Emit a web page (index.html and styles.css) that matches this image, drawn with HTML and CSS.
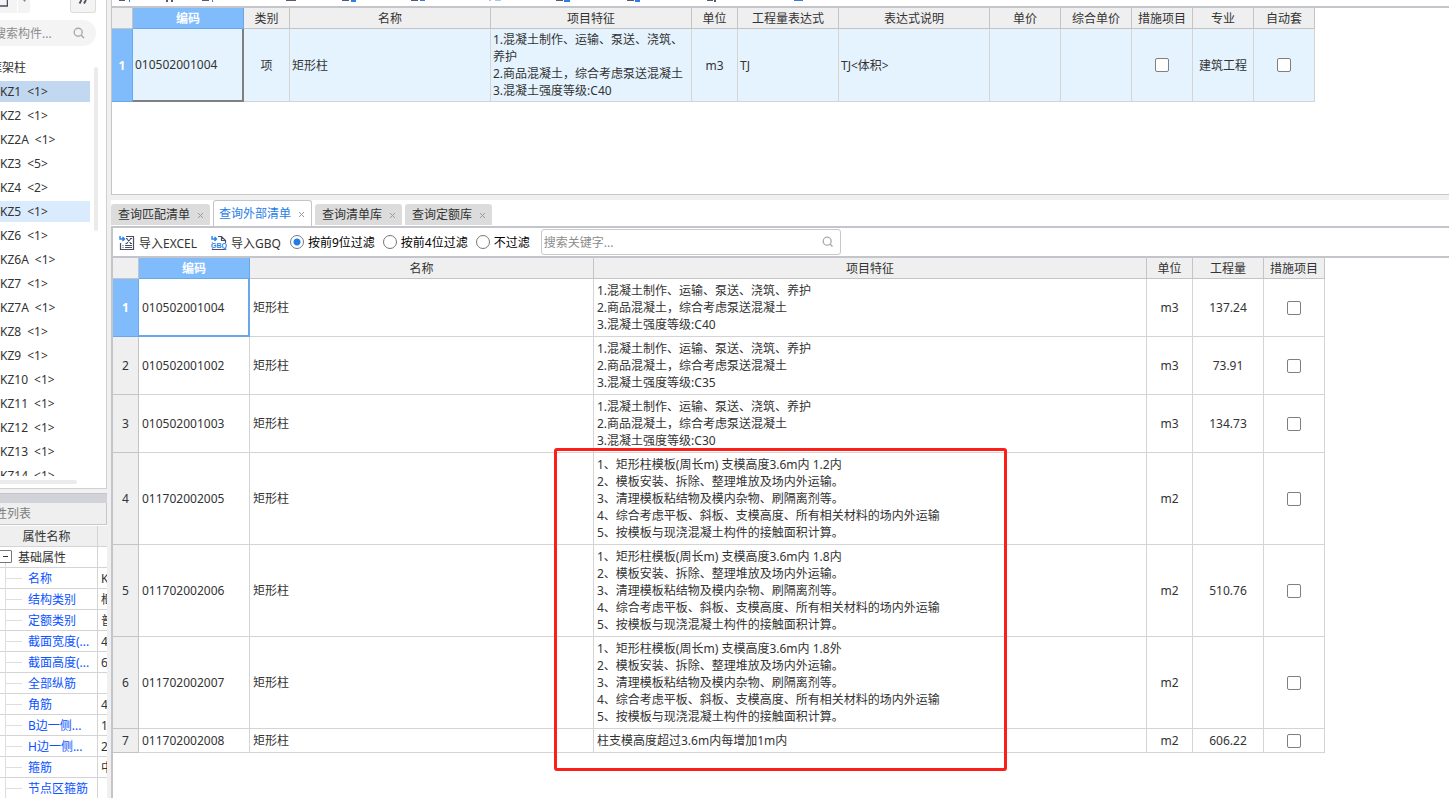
FILE: index.html
```html
<!DOCTYPE html>
<html lang="zh-CN">
<head>
<meta charset="utf-8">
<title>构件做法</title>
<link rel="stylesheet" href="styles.css">
</head>
<body>
<div class="app">
  <aside class="side">
    <section class="components">
      <div class="side-tools">
        <button class="tool-split" type="button" aria-label="新建"><svg width="20" height="12" viewBox="0 0 20 12"><path d="M8 0V6H19.500V0" fill="none" stroke="#4a4d5c" stroke-width="1.500"/></svg></button>
        <button class="tool-arrow" type="button" aria-label="更多"><svg width="5" height="3" viewBox="0 0 5 3"><path d="M1 0H4L2.500 2z" fill="#8a8a8a"/></svg></button>
        <button class="tool-expand" type="button" aria-label="展开"><svg width="10" height="4" viewBox="0 0 10 4"><path d="M1.500 3.500L3.500 0M6 3.500L8 0" fill="none" stroke="#4a4d5c" stroke-width="1.800"/></svg></button>
      </div>
      <label class="side-search">
        <input type="text" placeholder="搜索构件..." aria-label="搜索构件">
        <svg width="12" height="12" viewBox="0 0 12 12"><circle cx="5.200" cy="5.200" r="4" fill="none" stroke="#aaa" stroke-width="1.400"/><path d="M8.200 8.200L11 11" stroke="#aaa" stroke-width="1.600"/></svg>
      </label>
      <div class="tree">
        <ul class="tree-list">
          <li class="group">框架柱</li>
          <li class="current"><span>KZ1</span><span>&lt;1&gt;</span></li>
          <li><span>KZ2</span><span>&lt;1&gt;</span></li>
          <li><span>KZ2A</span><span>&lt;1&gt;</span></li>
          <li><span>KZ3</span><span>&lt;5&gt;</span></li>
          <li><span>KZ4</span><span>&lt;2&gt;</span></li>
          <li class="hover"><span>KZ5</span><span>&lt;1&gt;</span></li>
          <li><span>KZ6</span><span>&lt;1&gt;</span></li>
          <li><span>KZ6A</span><span>&lt;1&gt;</span></li>
          <li><span>KZ7</span><span>&lt;1&gt;</span></li>
          <li><span>KZ7A</span><span>&lt;1&gt;</span></li>
          <li><span>KZ8</span><span>&lt;1&gt;</span></li>
          <li><span>KZ9</span><span>&lt;1&gt;</span></li>
          <li><span>KZ10</span><span>&lt;1&gt;</span></li>
          <li><span>KZ11</span><span>&lt;1&gt;</span></li>
          <li><span>KZ12</span><span>&lt;1&gt;</span></li>
          <li><span>KZ13</span><span>&lt;1&gt;</span></li>
          <li><span>KZ14</span><span>&lt;1&gt;</span></li>
        </ul>
        <div class="scroll-y"></div>
      </div>
      <div class="scroll-x"></div>
    </section>
    <section class="props">
      <div class="props-grip"></div>
      <h2 class="props-title">属性列表</h2>
      <table class="props-table">
        <thead><tr><th class="p-name">属性名称</th><th class="p-val"></th></tr></thead>
        <tbody>
          <tr class="p-group"><td><button class="fold" type="button" aria-label="折叠"></button>基础属性</td><td></td></tr>
          <tr><td>名称</td><td>K</td></tr>
          <tr><td>结构类别</td><td>框</td></tr>
          <tr><td>定额类别</td><td>普</td></tr>
          <tr><td>截面宽度(...</td><td>4</td></tr>
          <tr><td>截面高度(...</td><td>6</td></tr>
          <tr><td>全部纵筋</td><td></td></tr>
          <tr><td>角筋</td><td>4</td></tr>
          <tr><td>B边一侧...</td><td>1</td></tr>
          <tr><td>H边一侧...</td><td>2</td></tr>
          <tr><td>箍筋</td><td>中</td></tr>
          <tr><td>节点区箍筋</td><td></td></tr>
        </tbody>
      </table>
    </section>
  </aside>

  <main class="main">
    <section class="bill">
      <div class="strip">
        <svg width="700" height="2" viewBox="0 0 700 2">
          <g fill="#555a72"><path d="M7 0h6v1h-6zM54 0h2v2h-2zM59 0h2v2h-2zM90 0h7v1h-7zM174 0h10v1h-10zM230 0h7v1h-7zM299 0h7v1h-7zM444 0h7v1h-7zM515 0h7v1h-7zM595 0h6v1h-6zM602 0h2v2h-2z"/></g>
          <g fill="#2f7de6"><path d="M17 0h1v2h-1zM100 0h1v2h-1zM239 0h5v2h-5zM308 0h5v1h-5zM452 0h6v2h-6zM523 0h5v2h-5zM682 0h9v1h-9z"/></g>
          <g fill="#a9c8f0"><path d="M377 0h2v1h-2zM383 0h6v1h-6z"/></g>
        </svg>
      </div>
      <table class="grid grid-top">
        <colgroup><col class="w21"><col class="w111"><col class="w46"><col class="w201"><col class="w201"><col class="w46"><col class="w101"><col class="w151"><col class="w71"><col class="w71"><col class="w61"><col class="w61"><col class="w61"></colgroup>
        <thead><tr><th></th><th class="on">编码</th><th>类别</th><th>名称</th><th>项目特征</th><th>单位</th><th>工程量表达式</th><th>表达式说明</th><th>单价</th><th>综合单价</th><th>措施项目</th><th>专业</th><th>自动套</th></tr></thead>
        <tbody><tr>
          <th class="on">1</th><td class="cell-on">010502001004</td><td class="mid">项</td><td>矩形柱</td>
          <td>1.混凝土制作、运输、泵送、浇筑、<br>养护<br>2.商品混凝土，综合考虑泵送混凝土<br>3.混凝土强度等级:C40</td>
          <td class="mid">m3</td><td>TJ</td><td>TJ&lt;体积&gt;</td><td></td><td></td>
          <td class="mid"><input type="checkbox" aria-label="措施项目"></td><td class="mid">建筑工程</td><td class="mid"><input type="checkbox" aria-label="自动套"></td>
        </tr></tbody>
      </table>
    </section>

    <section class="query">
      <div class="tabs" role="tablist">
        <div class="tab"><button type="button" role="tab">查询匹配清单</button><button class="close" type="button" aria-label="关闭"><svg width="7" height="7" viewBox="0 0 7 7"><path d="M1 1L6 6M6 1L1 6"/></svg></button></div>
        <div class="tab active"><button type="button" role="tab" aria-selected="true">查询外部清单</button><button class="close" type="button" aria-label="关闭"><svg width="7" height="7" viewBox="0 0 7 7"><path d="M1 1L6 6M6 1L1 6"/></svg></button></div>
        <div class="tab"><button type="button" role="tab">查询清单库</button><button class="close" type="button" aria-label="关闭"><svg width="7" height="7" viewBox="0 0 7 7"><path d="M1 1L6 6M6 1L1 6"/></svg></button></div>
        <div class="tab"><button type="button" role="tab">查询定额库</button><button class="close" type="button" aria-label="关闭"><svg width="7" height="7" viewBox="0 0 7 7"><path d="M1 1L6 6M6 1L1 6"/></svg></button></div>
      </div>
      <div class="query-body">
        <div class="bar">
          <button class="action" type="button">
            <svg width="16" height="16" viewBox="0 0 16 16" fill="none"><path d="M1 1V4H5M3.500 2L5.500 4L3.500 6" stroke="#2680eb" stroke-width="1.400"/><path d="M7 1.500H14.500V14.500H1.500V8" stroke="#4a4d63" stroke-width="1.200"/><path d="M7.500 3.500L12 8.500M12 3.500L7.500 8.500M6.500 8.500h2M11 8.500h2M7 3.500h1.500M11 3.500h2" stroke="#4a4d63" stroke-width="1.100"/><path d="M3.500 10.500H4.500M6 10.500H13M3.500 12.500H4.500M6 12.500H13" stroke="#4a4d63"/></svg>
            导入EXCEL</button>
          <button class="action" type="button">
            <svg width="16" height="16" viewBox="0 0 16 16" fill="none"><path d="M1 1V4H5M3.500 2L5.500 4L3.500 6" stroke="#2680eb" stroke-width="1.400"/><path d="M7 1.500H10.500L14.500 5.500V8M10.500 1.500V5.500H14.500M1.500 7.500V14.500H14.500V13" stroke="#4a4d63" stroke-width="1.200"/><path d="M1 8H15.500V13.500H1z" fill="#fff"/><text class="gbq" x="8" y="13" text-anchor="middle">GBQ</text></svg>
            导入GBQ</button>
          <div class="filters">
            <label><input type="radio" name="filter" checked>按前9位过滤</label>
            <label><input type="radio" name="filter">按前4位过滤</label>
            <label><input type="radio" name="filter">不过滤</label>
          </div>
          <label class="key-search">
            <input type="text" placeholder="搜索关键字..." aria-label="搜索关键字">
            <svg width="12" height="12" viewBox="0 0 12 12"><circle cx="5.200" cy="5.200" r="4" fill="none" stroke="#aaa" stroke-width="1.300"/><path d="M8.200 8.200L10.500 10.500" stroke="#aaa" stroke-width="1.500"/></svg>
          </label>
        </div>
        <div class="result">
          <table class="grid grid-list">
            <colgroup><col class="w26"><col class="w111"><col class="w344"><col class="w553"><col class="w46"><col class="w71"><col class="w61"></colgroup>
            <thead><tr><th></th><th class="on">编码</th><th>名称</th><th>项目特征</th><th>单位</th><th>工程量</th><th>措施项目</th></tr></thead>
            <tbody>
              <tr><th class="on">1</th><td class="cell-on">010502001004</td><td>矩形柱</td><td>1.混凝土制作、运输、泵送、浇筑、养护<br>2.商品混凝土，综合考虑泵送混凝土<br>3.混凝土强度等级:C40</td><td class="mid">m3</td><td class="mid">137.24</td><td class="mid"><input type="checkbox" aria-label="措施项目 1"></td></tr>
              <tr><th>2</th><td>010502001002</td><td>矩形柱</td><td>1.混凝土制作、运输、泵送、浇筑、养护<br>2.商品混凝土，综合考虑泵送混凝土<br>3.混凝土强度等级:C35</td><td class="mid">m3</td><td class="mid">73.91</td><td class="mid"><input type="checkbox" aria-label="措施项目 2"></td></tr>
              <tr><th>3</th><td>010502001003</td><td>矩形柱</td><td>1.混凝土制作、运输、泵送、浇筑、养护<br>2.商品混凝土，综合考虑泵送混凝土<br>3.混凝土强度等级:C30</td><td class="mid">m3</td><td class="mid">134.73</td><td class="mid"><input type="checkbox" aria-label="措施项目 3"></td></tr>
              <tr><th>4</th><td>011702002005</td><td>矩形柱</td><td>1、矩形柱模板(周长m) 支模高度3.6m内 1.2内<br>2、模板安装、拆除、整理堆放及场内外运输。<br>3、清理模板粘结物及模内杂物、刷隔离剂等。<br>4、综合考虑平板、斜板、支模高度、所有相关材料的场内外运输<br>5、按模板与现浇混凝土构件的接触面积计算。</td><td class="mid">m2</td><td class="mid"></td><td class="mid"><input type="checkbox" aria-label="措施项目 4"></td></tr>
              <tr><th>5</th><td>011702002006</td><td>矩形柱</td><td>1、矩形柱模板(周长m) 支模高度3.6m内 1.8内<br>2、模板安装、拆除、整理堆放及场内外运输。<br>3、清理模板粘结物及模内杂物、刷隔离剂等。<br>4、综合考虑平板、斜板、支模高度、所有相关材料的场内外运输<br>5、按模板与现浇混凝土构件的接触面积计算。</td><td class="mid">m2</td><td class="mid">510.76</td><td class="mid"><input type="checkbox" aria-label="措施项目 5"></td></tr>
              <tr><th>6</th><td>011702002007</td><td>矩形柱</td><td>1、矩形柱模板(周长m) 支模高度3.6m内 1.8外<br>2、模板安装、拆除、整理堆放及场内外运输。<br>3、清理模板粘结物及模内杂物、刷隔离剂等。<br>4、综合考虑平板、斜板、支模高度、所有相关材料的场内外运输<br>5、按模板与现浇混凝土构件的接触面积计算。</td><td class="mid">m2</td><td class="mid"></td><td class="mid"><input type="checkbox" aria-label="措施项目 6"></td></tr>
              <tr><th>7</th><td>011702002008</td><td>矩形柱</td><td>柱支模高度超过3.6m内每增加1m内</td><td class="mid">m2</td><td class="mid">606.22</td><td class="mid"><input type="checkbox" aria-label="措施项目 7"></td></tr>
            </tbody>
          </table>
          <div class="marker"></div>
        </div>
      </div>
    </section>
  </main>
</div>
</body>
</html>
```
FILE: styles.css
```css
* { box-sizing: border-box; }
body {
  margin: 0;
  font: 12px/17px "Noto Sans", "Noto Sans CJK SC", sans-serif;
  color: #333;
  background: #f0f0f0;
}
button, input { font: inherit; color: inherit; margin: 0; }
button { padding: 0; border: 0; background: none; }
svg { display: block; flex: none; }

.app { display: flex; gap: 4px; height: 100vh; overflow: hidden; }

/* Side column */
.side { flex: none; width: 107px; display: flex; flex-direction: column; gap: 4px; overflow: hidden; }
.components { background: #fff; border-right: 1px solid #d0d0d0; border-bottom: 1px solid #d0d0d0; height: 489px; flex: none; }
.side-tools { display: flex; height: 13px; margin-left: -12px; }
.side-tools button { background: #f4f4f4; display: flex; justify-content: center; align-items: flex-start; }
.side-tools .tool-split { width: 29px; justify-content: flex-start; }
.side-tools .tool-arrow { width: 12px; margin-left: 1px; border-radius: 0 0 3px 0; }
.side-tools .tool-expand { width: 26px; margin-left: 40px; border: 1px solid #dcdcdc; border-top: 0; border-radius: 0 0 3px 3px; }
.side-search {
  display: flex; align-items: center; height: 26px; width: 112px;
  margin: 7px 0 0 -16px; padding: 0 11px 0 10px;
  background: #f4f4f4; border-radius: 13px;
}
.side-search input { flex: 1; min-width: 0; border: 0; padding: 0; background: none; outline: 0; }
input::placeholder { color: #8c8c8c; opacity: 1; }

.tree { display: flex; height: 420px; margin-top: 10px; padding-top: 1px; overflow: hidden; }
.tree-list { list-style: none; margin: 0; padding: 0; width: 90px; }
.tree-list li { display: flex; gap: 6px; height: 21px; margin-bottom: 3px; align-items: center; white-space: nowrap; }
.tree-list .group { margin-left: -10px; }
.tree-list .current { background: #c1d8f0; }
.tree-list .hover { background: #d9ebfd; }
.scroll-y { width: 4px; height: 164px; margin: 10px 0 0 4px; border-radius: 2px; background: #ebebeb; }
.scroll-x { width: 77px; height: 4px; margin-top: 4px; border-radius: 0 2px 2px 0; background: #ebebeb; }

.props { flex: 1; background: #fff; overflow: hidden; }
.props-grip { height: 10px; background: #d2d3d8; border-top: 1px solid #c6c7cc; }
.props-title {
  margin: 0; padding: 2px 0 0; height: 22px; text-indent: -17px; white-space: nowrap;
  font-size: 12px; line-height: 17px; font-weight: 400; color: #7d7d7d;
  background: #efefef; border-bottom: 1px solid #c8c8c8; border-right: 1px solid #c8c8c8;
}
.props-table { table-layout: fixed; width: 119px; margin: 1px 0 0 -12px; border-spacing: 0; }
.props-table th, .props-table td {
  height: 21px; padding: 0 0 0 3px; text-align: left; font-weight: 400; white-space: nowrap;
  line-height: 17px; border-right: 1px solid #d4d4d4; border-bottom: 1px solid #d4d4d4;
}
.props-table th { background: #efefef; }
.props-table th:last-child, .props-table td:last-child { border-right: 0; overflow: hidden; }
.props-table .p-name { width: 110px; padding-left: 8px; text-align: center; }
.props-table td:first-child { position: relative; padding-left: 40px; color: #0a53ff; }
.props-table td:first-child::before {
  content: ""; position: absolute; left: 17px; top: 0; bottom: -1px; border-left: 1px solid #dedede;
}
.props-table td:first-child::after {
  content: ""; position: absolute; left: 17px; top: 10px; width: 17px; border-top: 1px solid #dedede;
}
.props-table .p-group td:first-child { padding-left: 30px; color: #333; }
.props-table .p-group td:first-child::after { display: none; }
.props-table .p-group td:first-child::before { top: 16px; }
.fold { position: absolute; left: 11px; top: 3px; width: 13px; height: 13px; border: 1px solid #777; border-radius: 1px; background: #fff; }
.fold::before { content: ""; position: absolute; left: 3px; top: 5px; width: 5px; height: 1px; background: #333; }

/* Main column */
.main { flex: 1; min-width: 0; display: flex; flex-direction: column; gap: 5px; }
.bill { flex: none; height: 195px; background: #fff; border-left: 1px solid #c4c5cb; border-bottom: 1px solid #c8c8c8; overflow: hidden; }
.strip { height: 8px; border-bottom: 2px solid #c4c5cb; }
.query { flex: 1; display: flex; flex-direction: column; background: #fff; overflow: hidden; }

.grid { table-layout: fixed; width: 0; border-spacing: 0; }
.w21 { width: 21px; } .w26 { width: 26px; } .w46 { width: 46px; } .w61 { width: 61px; }
.w71 { width: 71px; } .w101 { width: 101px; } .w111 { width: 111px; } .w151 { width: 151px; }
.w201 { width: 201px; } .w344 { width: 344px; } .w553 { width: 553px; }
.grid th, .grid td { border-right: 1px solid #d4d4d4; border-bottom: 1px solid #d4d4d4; white-space: nowrap; }
.grid th { padding: 0; font-weight: 400; text-align: center; background: #efefef; border-color: #c4c4c4; }
.grid thead th { height: 21px; }
.grid .on { background: #80bbfc; color: #fff; font-weight: 700; border-color: #68a8ea; }
.grid td { text-align: left; }
.grid-top td { padding: 2px; background: #e5f3ff; }
.grid-list td { padding: 3px; }
.grid td.mid { padding-left: 0; padding-right: 0; text-align: center; }
.grid-top .cell-on { border-right: 2px solid #7f7f7f; border-bottom: 2px solid #7f7f7f; }
.grid-list .cell-on { border-right: 2px solid #68a8ea; border-bottom: 2px solid #68a8ea; }
.grid input {
  appearance: none; display: block; width: 14px; height: 14px; margin: 0 auto;
  border: 1px solid #7f7f7f; border-radius: 2px; background: #fff;
}

.tabs { display: flex; align-items: flex-end; gap: 3px; height: 26px; }
.tab {
  display: flex; align-items: center; gap: 7px; height: 21px; margin-bottom: 1px; padding: 0 6px 0 7px;
  background: #dcdcdc; border-radius: 3px 3px 0 0; white-space: nowrap;
}
.tab.active {
  height: 26px; margin-bottom: 0; padding: 0 6px 0 5px; color: #1f7de6;
  background: #fff; border: 1px solid #c4c5cb; border-bottom: 0;
}
.tab .close { padding-top: 2px; }
.tab .close path { fill: none; stroke: #999; }

.query-body { flex: 1; border-left: 2px solid #c4c5cb; border-top: 2px solid #c4c5cb; }
.bar { display: flex; align-items: center; height: 30px; padding-left: 6px; border-bottom: 2px solid #c4c5cb; }
.action { display: flex; align-items: center; gap: 4px; margin-right: 14px; padding-top: 2px; white-space: nowrap; }
.gbq { font: 700 7px "Liberation Sans", sans-serif; fill: #2680eb; }
.filters { display: flex; gap: 8px; margin-left: -5px; color: #000; white-space: nowrap; }
.filters label { display: flex; align-items: center; gap: 4px; }
.filters input {
  appearance: none; width: 14px; height: 14px; border: 1px solid #777; border-radius: 50%; background: #fff;
}
.filters input:checked { background: radial-gradient(circle, #1f7de6 3px, #fff 4px); }
.key-search {
  display: flex; align-items: center; width: 300px; height: 26px; margin-left: 11px; padding: 0 6px 0 2px;
  border: 1px solid #c8c8c8; border-radius: 3px;
}
.key-search input { flex: 1; min-width: 0; border: 0; padding: 0; outline: 0; background: none; }

.result { position: relative; }
/* Highlight frame drawn over the formwork rows */
.marker { position: absolute; left: 441px; top: 190px; width: 453px; height: 323px; border: 3px solid #fb1f1a; border-radius: 3px; }
```
